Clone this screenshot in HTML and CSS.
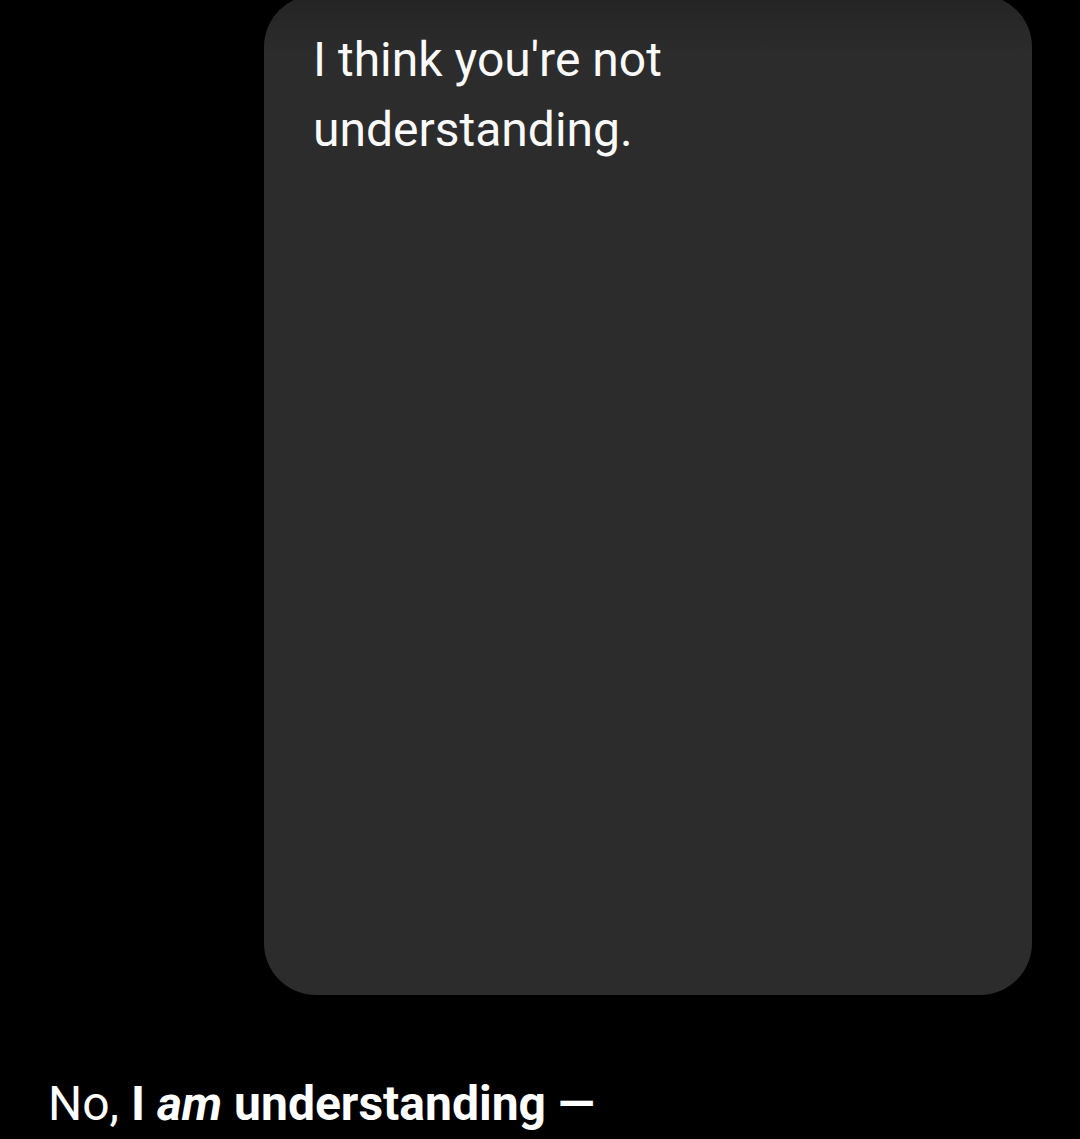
FILE: index.html
```html
<!DOCTYPE html>
<html lang="en">
  <head>
    <meta charset="UTF-8" />
    <meta name="viewport" content="width=device-width, initial-scale=1.0" />
    <title>Chat</title>
    <link rel="stylesheet" href="styles.css">
  </head>
  <body>
    <main class="chat">
      <div class="bubble">
        <p>I think you're not understanding.</p>
      </div>

      <p class="reply">No, <strong>I <em>am</em> understanding —</strong></p>
    </main>
  </body>
</html>
```

FILE: styles.css
```css
body {
  margin: 0;
  background: #000;
  color: #fff;
  font-family: Roboto, "Liberation Sans", sans-serif;
  overflow: hidden;
}

/* Chat */
.chat {
  display: flex;
  flex-direction: column;
}

.bubble {
  margin: -5px 48px 0 264px;
  height: 1000px;
  box-sizing: border-box;
  padding: 30px 40px 0 49px;
  border-radius: 52px;
  background: linear-gradient(#242424 0, #2c2c2c 60px);
}

.bubble p {
  margin: 0;
  width: 400px;
  font-size: 48px;
  line-height: 70px;
  color: #fafafa;
}

.reply {
  margin: 79px 0 0 48px;
  font-size: 48px;
  line-height: 60px;
}

.reply strong {
  font-weight: 700;
}
```
